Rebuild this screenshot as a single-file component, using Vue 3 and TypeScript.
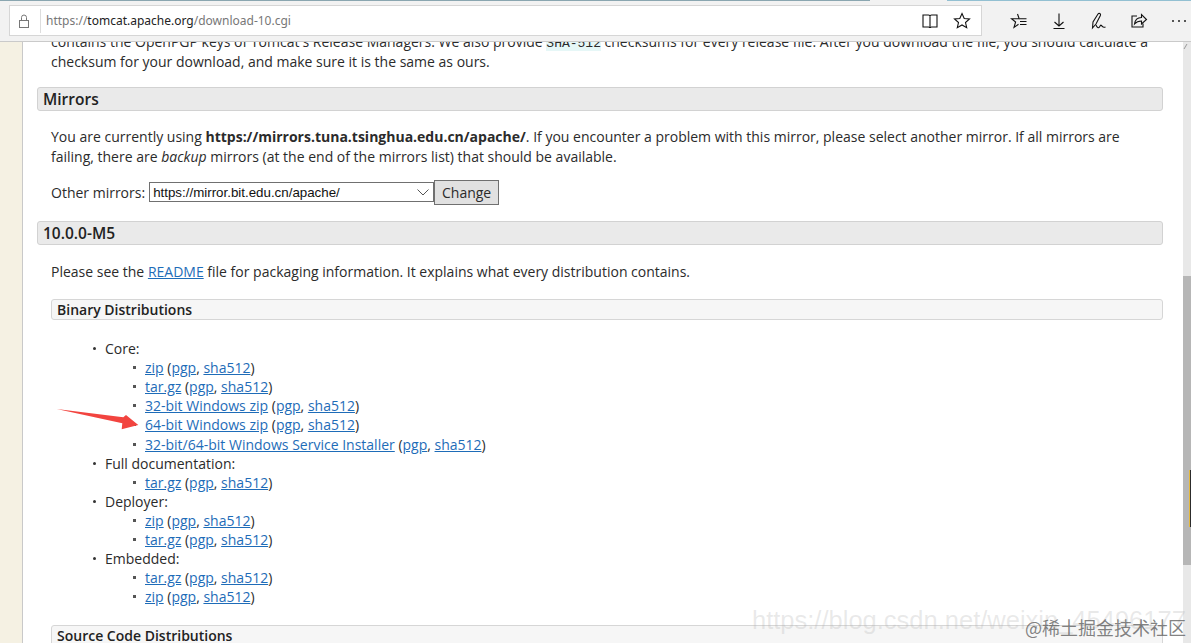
<script setup lang="ts">
interface Item {
  label: string
}

interface Group {
  title: string
  items: Item[]
}

const groups: Group[] = [
  {
    title: 'Core:',
    items: [
      { label: 'zip' },
      { label: 'tar.gz' },
      { label: '32-bit Windows zip' },
      { label: '64-bit Windows zip' },
      { label: '32-bit/64-bit Windows Service Installer' }
    ]
  },
  { title: 'Full documentation:', items: [{ label: 'tar.gz' }] },
  { title: 'Deployer:', items: [{ label: 'zip' }, { label: 'tar.gz' }] },
  { title: 'Embedded:', items: [{ label: 'tar.gz' }, { label: 'zip' }] }
]
</script>

<template>
  <div class="window">
    <header class="toolbar">
      <div class="address">
        <svg class="lock" width="14" height="16" viewBox="0 0 14 16" fill="none" stroke="#777" stroke-width="1">
          <rect x="2.500" y="7.500" width="9" height="7" />
          <path d="M4.500 7.500V4.500a2.500 2.500 0 0 1 5 0v3" />
        </svg>
        <span class="address-sep"></span>
        <span class="url">https://<b>tomcat.apache.org</b>/download-10.cgi</span>
        <span class="address-icons">
          <svg width="18" height="18" viewBox="0 0 18 18" fill="none" stroke="#111" stroke-width="1.100">
            <path d="M2 3h5.500c.8 0 1.500.5 1.500 1.200C9 3.500 9.700 3 10.500 3H16v12h-5.500c-.8 0-1.500.3-1.500 1 0-.7-.7-1-1.500-1H2z" />
            <path d="M9 4.200V16" />
          </svg>
          <svg width="18" height="18" viewBox="0 0 18 18" fill="none" stroke="#111" stroke-width="1.100">
            <path d="M9 1.500l2.200 5 5.300.5-4 3.500 1.200 5.200L9 13l-4.700 2.700 1.200-5.200-4-3.500 5.300-.5z" />
          </svg>
        </span>
      </div>
      <div class="tools">
        <svg width="18" height="18" viewBox="0 0 18 18" fill="none" stroke="#111" stroke-width="1.100">
          <path d="M7.500 2L9.200 6.700H1.500L5.600 10 4 15.500l4.500-3.200" />
          <path d="M9.500 6.700h7M10 9.500h6.500M10 12.500h6.500" />
        </svg>
        <svg width="18" height="18" viewBox="0 0 18 18" fill="none" stroke="#111" stroke-width="1.100">
          <path d="M9 1.500V14M4.500 10L9 14l4.500-4M3.500 16.500h11" />
        </svg>
        <svg width="18" height="18" viewBox="0 0 18 18" fill="none" stroke="#111" stroke-width="1.100">
          <path d="M2.500 16L3 10l5-8c1-1.300 3-.3 2.500 1.200L6 12z" />
          <path d="M6 13c1 2.500 2.500 3.500 3.500 2s1-2.500 2-1.500 1.500 2.500 4 1.500" />
        </svg>
        <svg width="18" height="18" viewBox="0 0 18 18" fill="none" stroke="#111" stroke-width="1.100">
          <path d="M7 4H2v11h11v-3.500" />
          <path d="M4.500 12c.5-4 3-6.500 7-6.500V2.500l5 5-5 4.500V9c-3 0-5 .8-7 3z" />
        </svg>
        <svg width="18" height="18" viewBox="0 0 18 18" fill="#222">
          <circle cx="3" cy="9" r="1" />
          <circle cx="9" cy="9" r="1" />
          <circle cx="15" cy="9" r="1" />
        </svg>
      </div>
    </header>

    <div class="body">
      <aside class="margin"></aside>
      <main class="page">
        <div class="page-inner">
          <p class="para lead">
            contains the OpenPGP keys of Tomcat's Release Managers. We also provide <code>SHA-512</code> checksums for every release file. After you download the file, you should calculate a
            checksum for your download, and make sure it is the same as ours.
          </p>

          <h3 class="section first">Mirrors</h3>
          <p class="para mirror-note">
            You are currently using <b>https://mirrors.tuna.tsinghua.edu.cn/apache/</b>. If you encounter a problem with this mirror, please select another mirror. If all mirrors are
            failing, there are <i>backup</i> mirrors (at the end of the mirrors list) that should be available.
          </p>
          <div class="mirror-row">
            <span>Other mirrors:</span>
            <span class="select">
              https://mirror.bit.edu.cn/apache/
              <svg width="12" height="7" viewBox="0 0 12 7" fill="none" stroke="#555" stroke-width="1">
                <path d="M.5.500L6 6l5.500-5.500" />
              </svg>
            </span>
            <span class="change">Change</span>
          </div>

          <h3 class="section">10.0.0-M5</h3>
          <p class="para">
            Please see the <a>README</a> file for packaging information. It explains what every distribution contains.
          </p>

          <h4 class="subsection">Binary Distributions</h4>
          <ul class="outer">
            <li v-for="group in groups" :key="group.title">
              {{ group.title }}
              <ul class="inner">
                <li v-for="item in group.items" :key="item.label">
                  <a>{{ item.label }}</a> (<a>pgp</a>, <a>sha512</a>)
                </li>
              </ul>
            </li>
          </ul>

          <h4 class="subsection source">Source Code Distributions</h4>
        </div>
      </main>
      <div class="scrollbar">
        <span class="arrow"></span>
        <span class="thumb"></span>
      </div>
    </div>

    <!-- annotation arrow and image watermarks -->
    <svg class="red-arrow" width="90" height="30" viewBox="0 0 90 30">
      <path d="M.7 1L67.300 9.300 70 7 82.300 17 65.700 21.300 66.300 15.300z" fill="#f2443f" />
    </svg>
    <span class="mark-blog">https://blog.csdn.net/weixin_45496177</span>
    <span class="mark-juejin">@稀土掘金技术社区</span>
    <span class="edge-glitch"></span>
  </div>
</template>

<style>
html,
body {
  margin: 0;
  overflow: hidden;
  background: #fff;
}
</style>

<style scoped>
.window {
  position: relative;
  width: 1191px;
  height: 643px;
  overflow: hidden;
  display: flex;
  flex-direction: column;
  font-family: "Open Sans", "Noto Sans", sans-serif;
  font-size: 14px;
  line-height: 19.2px;
  color: #2b2b2b;
}

.toolbar {
  position: relative;
  z-index: 1;
  height: 42px;
  flex: none;
  display: flex;
  align-items: flex-start;
  padding-top: 5px;
  box-sizing: border-box;
  background: linear-gradient(90deg, #8aa6b0 0 870px, #f2f2f2 870px 947px, #93c0d2 947px) top / 100% 1px no-repeat, #f2f2f2;
  border-bottom: 1px solid #cacaca;
}

.address {
  width: 973px;
  height: 31px;
  margin-left: 9px;
  box-sizing: border-box;
  display: flex;
  align-items: center;
  background: #fff;
  border: 1px solid #d6d6d6;
}

.lock {
  margin-left: 7px;
}

.address-sep {
  width: 1px;
  height: 24px;
  margin-left: 9px;
  background: #ddd;
}

.url {
  margin-left: 5px;
  font-family: "Noto Sans", sans-serif;
  font-size: 12px;
  color: #777;
}

.url b {
  font-weight: 400;
  color: #222;
}

.address-icons {
  margin-left: auto;
  margin-right: 10px;
  display: flex;
  gap: 14px;
}

.tools {
  display: flex;
  align-items: center;
  height: 31px;
  margin-left: 28px;
  gap: 22px;
}

.body {
  flex: 1;
  min-height: 0;
  display: flex;
}

.margin {
  width: 22px;
  flex: none;
  background: #f5f1e3;
  border-right: 1px solid #c9c9c9;
}

.page {
  flex: 1;
  min-width: 0;
  overflow: hidden;
  background: #fff;
}

.page-inner {
  margin-top: -9px;
  padding: 0 20px 0 14px;
}

.para {
  margin: 0;
  padding-left: 14px;
}

.para.lead {
  line-height: 18px;
}

.para.mirror-note {
  line-height: 20px;
}

.para code {
  font-family: "Liberation Mono", monospace;
  font-size: 13px;
  background: #e6f7f7;
}

.section {
  margin: 16px 0 17.500px;
  padding-left: 5px;
  height: 24px;
  line-height: 22px;
  box-sizing: border-box;
  font-size: 15.500px;
  font-weight: 600;
  color: #222;
  background: #eaeaea;
  border: 1px solid #d2d2d2;
  border-radius: 3px;
}

.section.first {
  margin-top: 15.500px;
  margin-bottom: 16px;
}

.mirror-row {
  display: flex;
  align-items: center;
  margin: 13.400px 0 16px 14px;
  height: 25px;
}

.select {
  margin-left: 4px;
  width: 285px;
  height: 20px;
  box-sizing: border-box;
  display: flex;
  align-items: center;
  justify-content: space-between;
  padding: 0 4px 0 3px;
  border: 1px solid #707070;
  font-family: "Liberation Sans", sans-serif;
  font-size: 13.330px;
  color: #111;
  background: #fff;
}

.change {
  width: 65px;
  height: 25px;
  box-sizing: border-box;
  text-align: center;
  line-height: 23px;
  background: #e1e1e1;
  border: 1px solid #707070;
}

a {
  color: #1e6cb8;
  text-decoration: underline;
}

.subsection {
  margin: 17px 0 0 14px;
  height: 21px;
  padding-left: 5px;
  box-sizing: border-box;
  line-height: 19px;
  font-size: 14px;
  font-weight: 600;
  color: #222;
  background: #f6f6f6;
  border: 1px solid #d6d6d6;
  border-radius: 3px;
}

.outer {
  margin: 19.500px 0 0;
  padding: 0 0 0 68px;
  list-style: none;
  line-height: 19.100px;
}

.outer > li {
  position: relative;
}

.outer > li::before {
  content: "";
  position: absolute;
  left: -12px;
  top: 8px;
  width: 3px;
  height: 3px;
  border-radius: 50%;
  background: #333;
}

.inner {
  margin: 0;
  padding: 0 0 0 40px;
  list-style: none;
}

.inner > li {
  position: relative;
}

.inner > li::before {
  content: "";
  position: absolute;
  left: -12px;
  top: 8px;
  width: 3px;
  height: 3px;
  background: #555;
}

.source {
  margin-top: 19px;
}

.scrollbar {
  position: relative;
  width: 8px;
  flex: none;
  background: #e8e8e8;
}

.thumb {
  position: absolute;
  top: 234px;
  left: 0;
  right: 0;
  height: 289px;
  background: #b6b6b6;
}

.arrow {
  position: absolute;
  top: 2px;
  left: 2px;
  width: 5px;
  height: 5px;
  border-left: 1px solid #999;
  transform: skewX(-30deg);
}

.red-arrow {
  position: absolute;
  left: 56px;
  top: 408px;
}

.mark-blog {
  position: absolute;
  left: 752px;
  top: 602px;
  font-family: "Liberation Sans", sans-serif;
  font-size: 25.500px;
  line-height: 36px;
  white-space: nowrap;
  color: rgba(170, 170, 170, 0.26);
}

.mark-juejin {
  position: absolute;
  left: 1025px;
  top: 616px;
  font-family: "Noto Sans CJK SC", sans-serif;
  font-size: 18px;
  line-height: 22px;
  white-space: nowrap;
  color: rgba(90, 90, 90, 0.75);
}

.edge-glitch {
  position: absolute;
  left: 1189px;
  top: 470px;
  width: 2px;
  height: 57px;
  background: #2c2c2c;
  border-left: 1px solid #e6b93a;
  box-sizing: border-box;
}
</style>
